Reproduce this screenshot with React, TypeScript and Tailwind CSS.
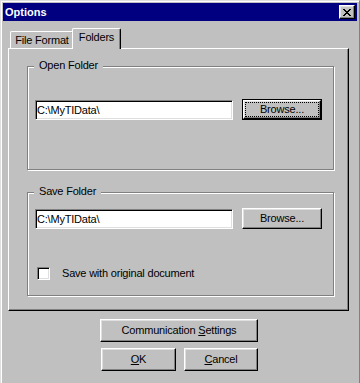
import React from "react";

const raised =
  "border border-t-white border-l-white border-r-black border-b-black shadow-[inset_-1px_-1px_0_#808080,inset_1px_1px_0_#dfdfdf]";
const sunken =
  "border border-t-[#808080] border-l-[#808080] border-r-white border-b-white shadow-[inset_1px_1px_0_#000,inset_-1px_-1px_0_#dfdfdf]";

function CloseGlyph() {
  const rows: [number, number][][] = [
    [[0, 2], [6, 2]],
    [[1, 2], [5, 2]],
    [[2, 4]],
    [[3, 2]],
    [[2, 4]],
    [[1, 2], [5, 2]],
    [[0, 2], [6, 2]],
  ];
  return (
    <svg width="8" height="7" viewBox="0 0 8 7" shapeRendering="crispEdges">
      {rows.map((r, y) =>
        r.map(([x, w], i) => <rect key={`${y}-${i}`} x={x} y={y} width={w} height={1} fill="#000" />)
      )}
    </svg>
  );
}

function Button({
  children,
  className = "",
}: {
  children: React.ReactNode;
  className?: string;
}) {
  return (
    <div className={`${raised} bg-[#c0c0c0] flex items-center justify-center ${className}`}>
      {children}
    </div>
  );
}

function DefaultButton({ children, className = "" }: { children: React.ReactNode; className?: string }) {
  return (
    <div className={`border border-black bg-[#c0c0c0] flex ${className}`}>
      <div className={`${raised} flex-1 p-[1px] flex`}>
        <div className="flex-1 border border-dotted border-black flex items-center justify-center">
          {children}
        </div>
      </div>
    </div>
  );
}

function GroupBox({
  label,
  className = "",
  children,
}: {
  label: string;
  className?: string;
  children: React.ReactNode;
}) {
  return (
    <div
      className={`relative w-[307px] h-[104px] border border-[#808080] shadow-[1px_1px_0_#fff,inset_1px_1px_0_#fff] ${className}`}
    >
      <div className="absolute left-[6px] top-[-8px] px-[5px] bg-[#c0c0c0] leading-[13px]">{label}</div>
      {children}
    </div>
  );
}

function PathInput() {
  return (
    <div className={`${sunken} w-[198px] h-[20px] mt-[1px] bg-white pl-[1px] flex items-center`}>
      {"C:\\MyTIData\\"}
    </div>
  );
}

export default function App() {
  return (
    <div className="w-[360px] h-[383px] overflow-hidden bg-[#c0c0c0] border-l border-t border-r border-l-[#dfdfdf] border-t-[#dfdfdf] border-r-[#808080] font-['Liberation_Sans',Arial,sans-serif] text-[11px] leading-[13px] tracking-[-0.2px] text-black select-none">
      <div className="h-full border-l border-t border-white pl-[1px] pt-[1px] pr-[2px] flex flex-col">
        {/* Title bar */}
        <div className="h-[18px] shrink-0 bg-[#000080] flex items-center justify-between pl-[2px] pr-[2px]">
          <span className="text-white font-bold tracking-normal">Options</span>
          <div className={`${raised} bg-[#c0c0c0] w-[16px] h-[14px] flex items-center justify-center`}>
            <CloseGlyph />
          </div>
        </div>

        {/* Tabs */}
        <div className="relative z-10 mt-[7px] -mb-[1px] ml-[5px] pl-[2px] h-[21px] flex items-end">
          <div className="w-[64px] h-[17px] mb-[1px] border-l border-t border-r border-l-white border-t-white border-r-black shadow-[inset_-1px_0_0_#808080] rounded-t-[2px] bg-[#c0c0c0] pt-[2px] text-center">
            File Format
          </div>
          <div className="-ml-[2px] w-[49px] h-[21px] border-l border-t border-r border-l-white border-t-white border-r-black shadow-[inset_-1px_0_0_#808080] rounded-t-[2px] bg-[#c0c0c0] pt-[2px] text-center">
            Folders
          </div>
        </div>

        {/* Panel */}
        <div className="ml-[5px] w-[341px] h-[263px] shrink-0 border border-l-white border-t-white border-r-black border-b-black shadow-[inset_-1px_-1px_0_#808080] pl-[18px] pt-[17px]">
          <GroupBox label="Open Folder" className="pl-[7px] pt-[32px]">
            <div className="flex items-start">
              <PathInput />
              <DefaultButton className="ml-[9px] w-[80px] h-[21px]">Browse...</DefaultButton>
            </div>
          </GroupBox>

          <GroupBox label="Save Folder" className="mt-[22px] pl-[7px] pt-[15px]">
            <div className="flex items-start">
              <PathInput />
              <Button className="ml-[9px] w-[80px] h-[21px]">Browse...</Button>
            </div>
            <div className="mt-[38px] ml-[2px] flex items-center">
              <div className={`${sunken} w-[13px] h-[13px] bg-white`} />
              <span className="ml-[12px]">Save with original document</span>
            </div>
          </GroupBox>
        </div>

        {/* Bottom buttons */}
        <div className="mt-[8px] ml-[97px] flex flex-col">
          <Button className="w-[158px] h-[23px]">
            <span>
              Communication <span className="underline underline-offset-[1px]">S</span>ettings
            </span>
          </Button>
          <div className="mt-[6px] flex">
            <Button className="ml-[1px] w-[75px] h-[23px]">
              <span>
                <span className="underline underline-offset-[1px]">O</span>K
              </span>
            </Button>
            <Button className="ml-[8px] w-[74px] h-[23px]">
              <span>
                <span className="underline underline-offset-[1px]">C</span>ancel
              </span>
            </Button>
          </div>
        </div>
      </div>
    </div>
  );
}
